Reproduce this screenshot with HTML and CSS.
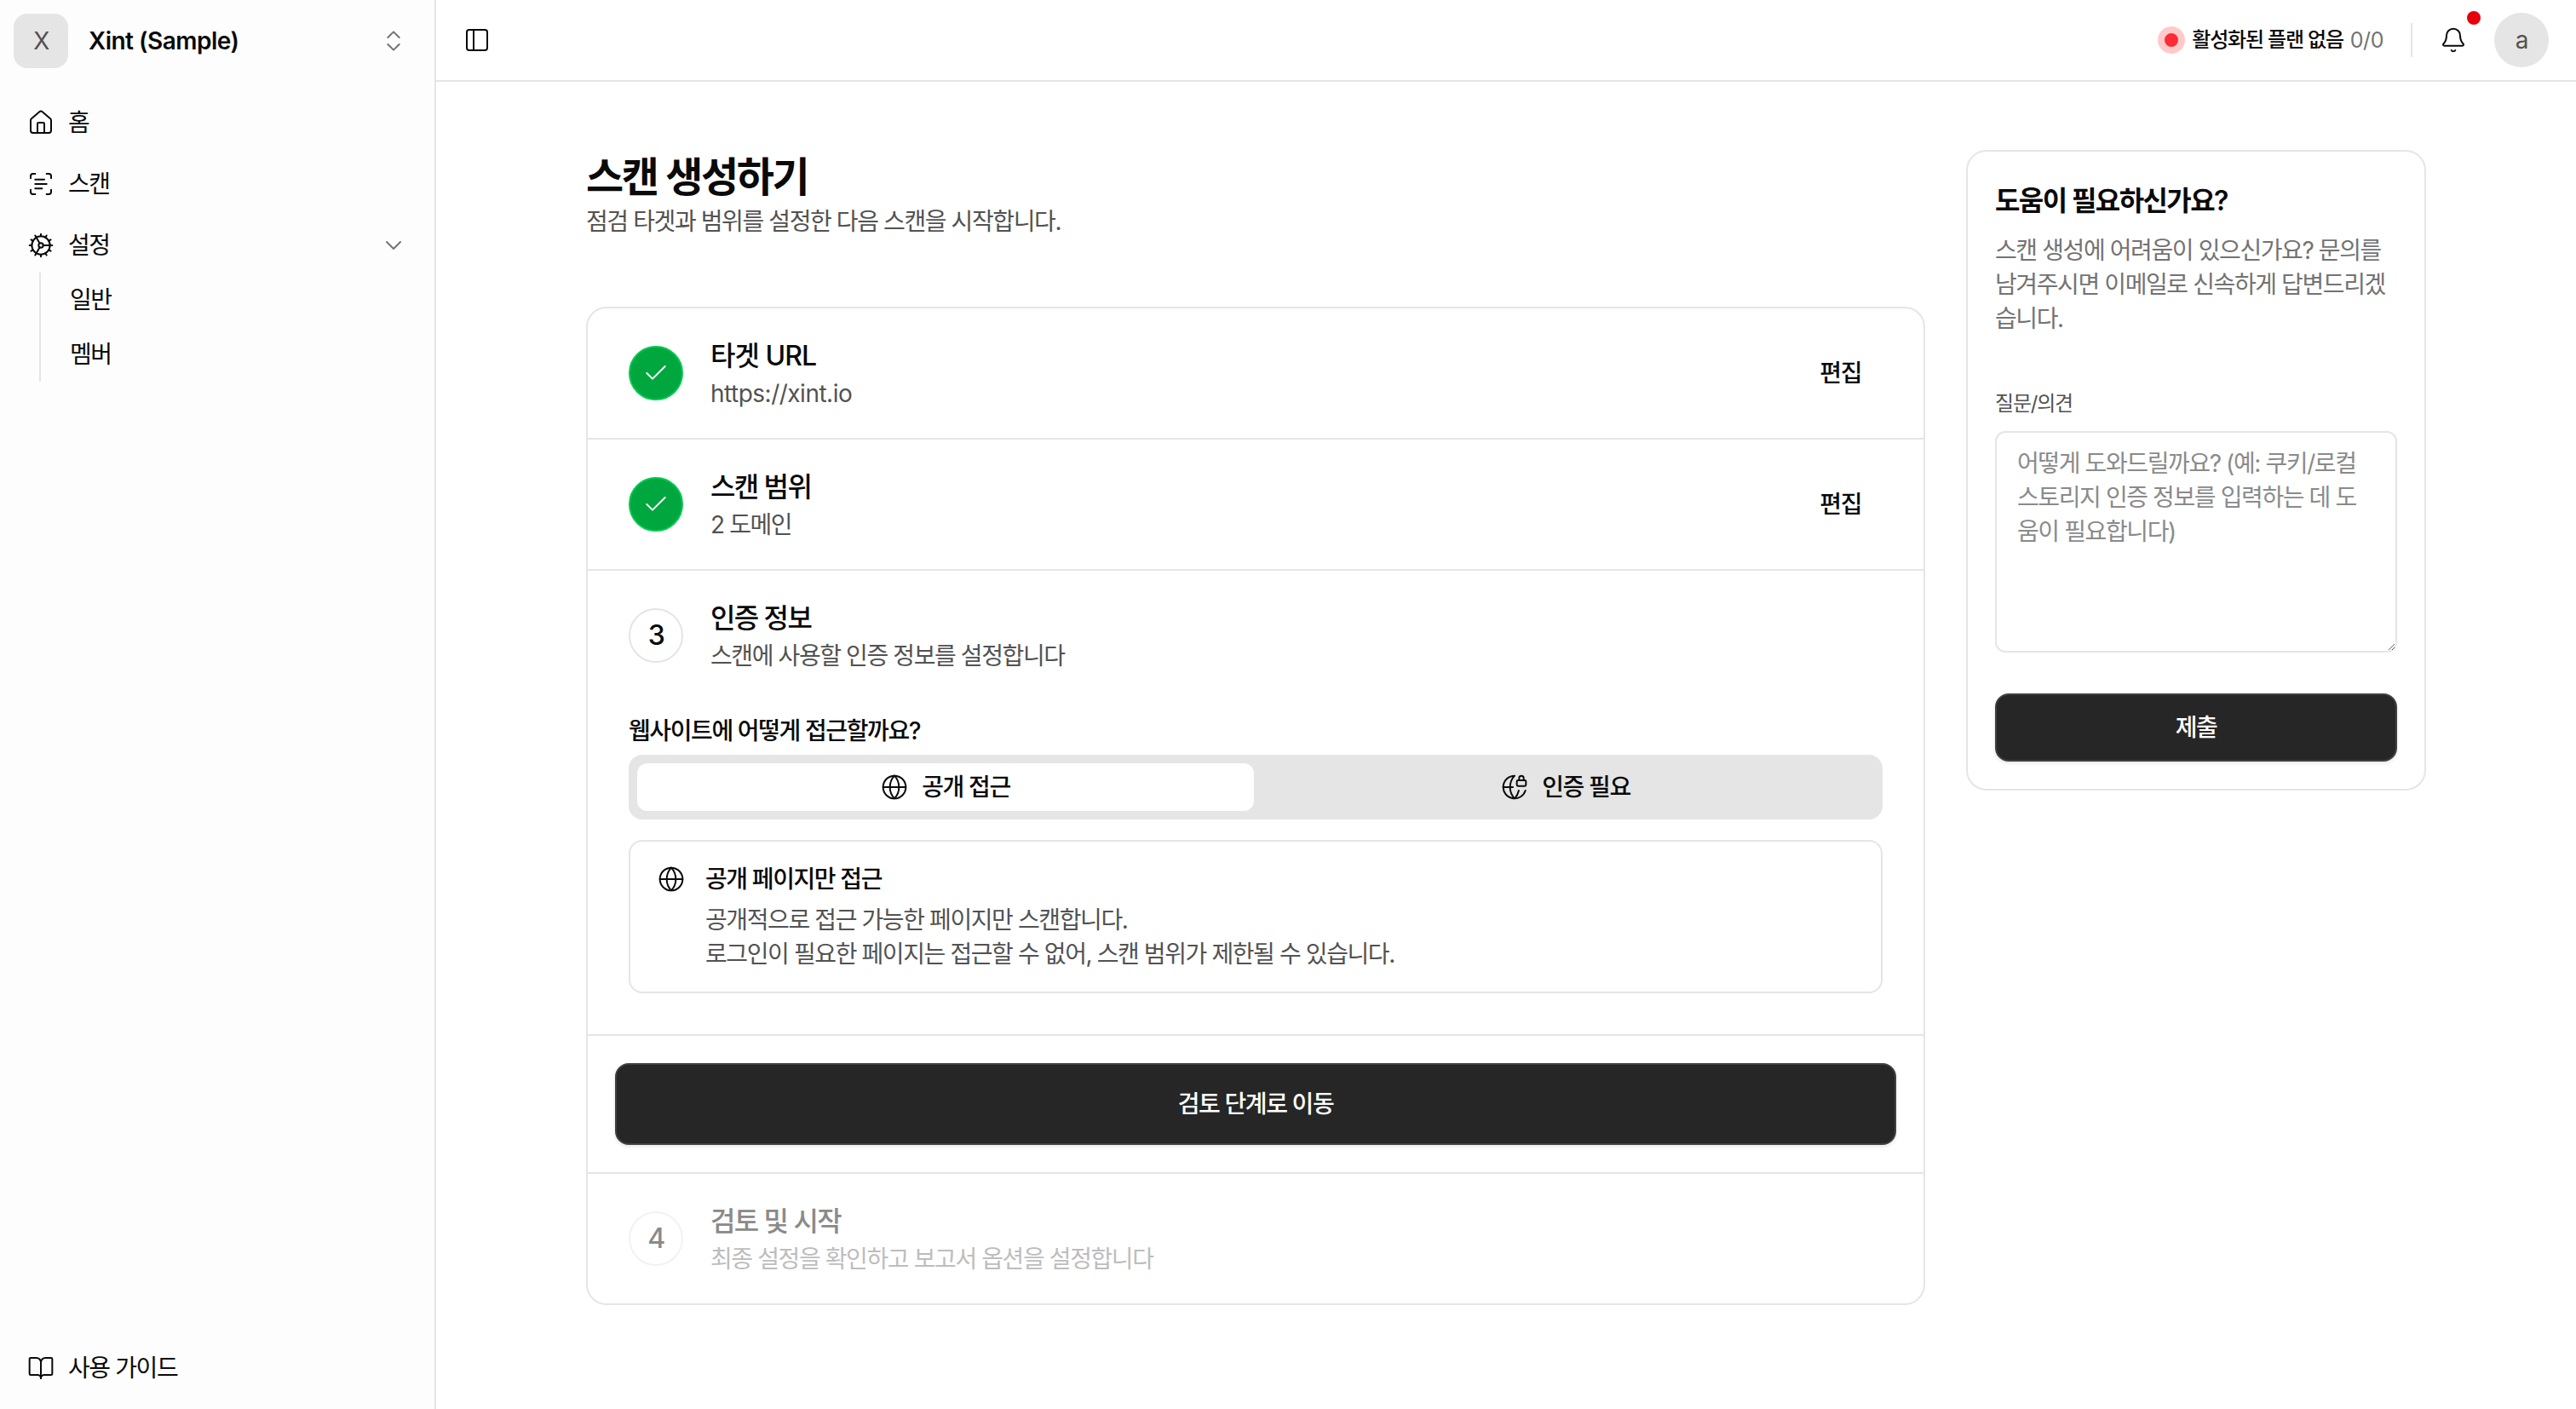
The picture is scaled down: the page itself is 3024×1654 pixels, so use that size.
FILE: index.html
```html
<!DOCTYPE html>
<html lang="ko">
<head>
    <meta charset="UTF-8">
    <title>스캔 생성하기 - Xint</title>
    <link rel="stylesheet" href="styles.css">
</head>
<body>

    <!-- Sidebar -->
    <aside class="sidebar">
        <div class="org-switch">
            <span class="org-logo">X</span>
            <span class="org-name latin">Xint (Sample)</span>
            <svg class="icon icon-muted" viewBox="0 0 24 24"><path d="m7 15 5 5 5-5"/><path d="m7 9 5-5 5 5"/></svg>
        </div>

        <nav class="nav">
            <a class="nav-item">
                <svg class="icon" viewBox="0 0 24 24"><path d="M15 21v-8a1 1 0 0 0-1-1h-4a1 1 0 0 0-1 1v8"/><path d="M3 10a2 2 0 0 1 .709-1.528l7-5.999a2 2 0 0 1 2.582 0l7 5.999A2 2 0 0 1 21 10v9a2 2 0 0 1-2 2H5a2 2 0 0 1-2-2z"/></svg>
                <span>홈</span>
            </a>
            <a class="nav-item">
                <svg class="icon" viewBox="0 0 24 24"><path d="M3 7V5a2 2 0 0 1 2-2h2"/><path d="M17 3h2a2 2 0 0 1 2 2v2"/><path d="M21 17v2a2 2 0 0 1-2 2h-2"/><path d="M7 21H5a2 2 0 0 1-2-2v-2"/><path d="M7 8h8"/><path d="M7 12h10"/><path d="M7 16h6"/></svg>
                <span>스캔</span>
            </a>
            <a class="nav-item">
                <svg class="icon" viewBox="0 0 24 24"><path d="M12 20a8 8 0 1 0 0-16 8 8 0 0 0 0 16Z"/><path d="M12 14a2 2 0 1 0 0-4 2 2 0 0 0 0 4Z"/><path d="M12 2v2"/><path d="M12 22v-2"/><path d="m17 20.66-1-1.73"/><path d="M11 10.27 7 3.34"/><path d="m20.66 17-1.73-1"/><path d="m3.34 7 1.73 1"/><path d="M14 12h8"/><path d="M2 12h2"/><path d="m20.66 7-1.73 1"/><path d="m3.34 17 1.73-1"/><path d="m17 3.34-1 1.73"/><path d="m11 13.73-4 6.93"/></svg>
                <span>설정</span>
                <svg class="icon icon-muted nav-caret" viewBox="0 0 24 24"><path d="m6 9 6 6 6-6"/></svg>
            </a>
            <div class="subnav">
                <a class="subnav-item">일반</a>
                <a class="subnav-item">멤버</a>
            </div>
        </nav>

        <a class="nav-item guide-link">
            <svg class="icon" viewBox="0 0 24 24"><path d="M12 7v14"/><path d="M3 18a1 1 0 0 1-1-1V4a1 1 0 0 1 1-1h5a4 4 0 0 1 4 4 4 4 0 0 1 4-4h5a1 1 0 0 1 1 1v13a1 1 0 0 1-1 1h-6a3 3 0 0 0-3 3 3 3 0 0 0-3-3z"/></svg>
            <span>사용 가이드</span>
        </a>
    </aside>

    <div class="page">
        <!-- Top Bar -->
        <header class="topbar">
            <svg class="icon" viewBox="0 0 24 24"><rect width="18" height="18" x="3" y="3" rx="2"/><path d="M9 3v18"/></svg>
            <div class="topbar-right">
                <span class="plan-dot"></span>
                <span class="plan-text">활성화된 플랜 없음</span>
                <span class="plan-count latin">0/0</span>
                <span class="topbar-sep"></span>
                <span class="bell">
                    <svg class="icon" viewBox="0 0 24 24"><path d="M10.268 21a2 2 0 0 0 3.464 0"/><path d="M3.262 15.326A1 1 0 0 0 4 17h16a1 1 0 0 0 .74-1.673C19.41 13.956 18 12.499 18 8A6 6 0 0 0 6 8c0 4.499-1.411 5.956-2.738 7.326"/></svg>
                    <span class="bell-badge"></span>
                </span>
                <span class="avatar">a</span>
            </div>
        </header>

        <main class="content">
            <section class="wizard">
                <h1>스캔 생성하기</h1>
                <p class="lead">점검 타겟과 범위를 설정한 다음 스캔을 시작합니다.</p>

                <div class="steps">
                    <div class="step">
                        <span class="step-badge done">
                            <svg class="icon" viewBox="0 0 24 24"><path d="M20 6 9 17l-5-5"/></svg>
                        </span>
                        <div class="step-text">
                            <h3 class="mixed">타겟 URL</h3>
                            <p class="latin">https://xint.io</p>
                        </div>
                        <button class="edit-btn">편집</button>
                    </div>

                    <div class="step">
                        <span class="step-badge done">
                            <svg class="icon" viewBox="0 0 24 24"><path d="M20 6 9 17l-5-5"/></svg>
                        </span>
                        <div class="step-text">
                            <h3>스캔 범위</h3>
                            <p>2 도메인</p>
                        </div>
                        <button class="edit-btn">편집</button>
                    </div>

                    <div class="step-open">
                        <div class="step-head">
                            <span class="step-badge">3</span>
                            <div class="step-text">
                                <h3>인증 정보</h3>
                                <p>스캔에 사용할 인증 정보를 설정합니다</p>
                            </div>
                        </div>

                        <p class="field-label">웹사이트에 어떻게 접근할까요?</p>
                        <div class="segmented">
                            <div class="segment active">
                                <svg class="icon" viewBox="0 0 24 24"><circle cx="12" cy="12" r="10"/><path d="M12 2a14.5 14.5 0 0 0 0 20 14.5 14.5 0 0 0 0-20"/><path d="M2 12h20"/></svg>
                                <span>공개 접근</span>
                            </div>
                            <div class="segment">
                                <svg class="icon" viewBox="0 0 24 24"><path d="M15.686 15A14.5 14.5 0 0 1 12 22a14.5 14.5 0 0 1 0-20 10 10 0 1 0 9.542 13"/><path d="M2 12h8.5"/><path d="M20 6V4a2 2 0 1 0-4 0v2"/><rect width="8" height="5" x="14" y="6" rx="1"/></svg>
                                <span>인증 필요</span>
                            </div>
                        </div>

                        <div class="info-box">
                            <svg class="icon" viewBox="0 0 24 24"><circle cx="12" cy="12" r="10"/><path d="M12 2a14.5 14.5 0 0 0 0 20 14.5 14.5 0 0 0 0-20"/><path d="M2 12h20"/></svg>
                            <div>
                                <h4>공개 페이지만 접근</h4>
                                <p>공개적으로 접근 가능한 페이지만 스캔합니다.<br>로그인이 필요한 페이지는 접근할 수 없어, 스캔 범위가 제한될 수 있습니다.</p>
                            </div>
                        </div>
                    </div>

                    <div class="step-action">
                        <button class="primary-btn">검토 단계로 이동</button>
                    </div>

                    <div class="step step-disabled">
                        <span class="step-badge">4</span>
                        <div class="step-text">
                            <h3>검토 및 시작</h3>
                            <p>최종 설정을 확인하고 보고서 옵션을 설정합니다</p>
                        </div>
                    </div>
                </div>
            </section>

            <!-- Help Card -->
            <aside class="help-card">
                <h2>도움이 필요하신가요?</h2>
                <p class="help-desc">스캔 생성에 어려움이 있으신가요? 문의를 남겨주시면 이메일로 신속하게 답변드리겠습니다.</p>
                <label class="help-label" for="question">질문/의견</label>
                <textarea class="help-input" id="question" placeholder="어떻게 도와드릴까요? (예: 쿠키/로컬 스토리지 인증 정보를 입력하는 데 도움이 필요합니다)"></textarea>
                <button class="primary-btn help-submit">제출</button>
            </aside>
        </main>
    </div>

</body>
</html>
```

FILE: styles.css
```css
* {
    box-sizing: border-box;
    letter-spacing: -0.05em;
}

/* Latin strings need less tightening than hangul */
.latin {
    letter-spacing: -0.018em;
}

.mixed {
    letter-spacing: -0.03em;
}

body {
    margin: 0;
    height: 1654px;
    display: flex;
    background: #fff;
    color: #0a0a0a;
    font-family: Inter, "Noto Sans CJK KR", sans-serif;
    font-size: 28px;
    line-height: 40px;
    overflow: hidden;
}

h1, h2, h3, h4, p {
    margin: 0;
}

button {
    font: inherit;
    cursor: pointer;
}

.icon {
    width: 32px;
    height: 32px;
    flex: none;
    fill: none;
    stroke: currentColor;
    stroke-width: 1.5;
    stroke-linecap: round;
    stroke-linejoin: round;
}

.icon-muted {
    color: #737373;
}

/* Sidebar */
.sidebar {
    width: 512px;
    flex: none;
    display: flex;
    flex-direction: column;
    background: #fdfdfd;
    border-right: 2px solid #e5e5e5;
    padding: 16px;
}

.org-switch {
    display: flex;
    align-items: center;
    height: 64px;
    padding-right: 16px;
}

.org-logo {
    width: 64px;
    height: 64px;
    display: flex;
    align-items: center;
    justify-content: center;
    background: #e5e5e5;
    border-radius: 16px;
    color: #525252;
}

.org-name {
    flex: 1;
    margin-left: 24px;
    font-weight: 600;
}

.nav {
    flex: 1;
    margin-top: 32px;
    display: flex;
    flex-direction: column;
    gap: 8px;
}

.nav-item {
    display: flex;
    align-items: center;
    gap: 16px;
    height: 64px;
    padding: 0 16px;
}

.nav-caret {
    margin-left: auto;
}

.subnav {
    margin: -8px 0 0 30px;
    padding-left: 34px;
    border-left: 2px solid #e5e5e5;
}

.subnav-item {
    display: flex;
    align-items: center;
    height: 64px;
}

/* Top Bar */
.page {
    flex: 1;
    min-width: 0;
}

.topbar {
    height: 96px;
    display: flex;
    align-items: center;
    justify-content: space-between;
    padding: 0 32px;
    border-bottom: 2px solid #e5e5e5;
}

.topbar-right {
    display: flex;
    align-items: center;
}

.plan-dot {
    width: 32px;
    height: 32px;
    border-radius: 50%;
    background: #fb2c36;
    border: 8px solid #ffc9c9;
}

.plan-text {
    margin-left: 8px;
    font-size: 24px;
    font-weight: 500;
}

.plan-count {
    margin-left: 8px;
    font-size: 25px;
    color: #737373;
}

.topbar-sep {
    width: 2px;
    height: 40px;
    margin: 0 32px;
    background: #e5e5e5;
}

.bell {
    position: relative;
    display: flex;
    margin-right: 32px;
}

.bell-badge {
    position: absolute;
    top: -18px;
    right: -16px;
    width: 16px;
    height: 16px;
    border-radius: 50%;
    background: #e7000b;
}

.avatar {
    width: 64px;
    height: 64px;
    display: flex;
    align-items: center;
    justify-content: center;
    border-radius: 50%;
    background: #e5e5e5;
    color: #525252;
}

/* Main Content */
.content {
    width: 2160px;
    margin: 0 auto;
    padding-top: 80px;
    display: flex;
    align-items: flex-start;
    gap: 48px;
}

.wizard {
    flex: 1;
    min-width: 0;
}

h1 {
    font-size: 48px;
    line-height: 64px;
    font-weight: 600;
}

.lead {
    color: #525252;
}

.steps {
    margin-top: 80px;
    border: 2px solid #e5e5e5;
    border-radius: 24px;
}

.step {
    display: flex;
    align-items: center;
    gap: 32px;
    padding: 32px 48px;
    border-bottom: 2px solid #e5e5e5;
}

.step:last-child {
    border-bottom: none;
}

.step-head {
    display: flex;
    align-items: center;
    gap: 32px;
}

.step-badge {
    width: 64px;
    height: 64px;
    flex: none;
    display: flex;
    align-items: center;
    justify-content: center;
    border: 2px solid #e5e5e5;
    border-radius: 50%;
    font-size: 32px;
    font-weight: 500;
}

.step-badge.done {
    background: #00a63e;
    border-color: #00c950;
    color: #fff;
}

.step-text {
    flex: 1;
}

.step-text h3 {
    font-size: 32px;
    line-height: 48px;
    font-weight: 500;
}

.step-text p {
    color: #525252;
}

.edit-btn {
    background: none;
    border: none;
    padding: 0 32px;
    font-weight: 500;
    margin-right: -7px;
    color: #0a0a0a;
}

.step-open {
    padding: 32px 48px 48px;
    border-bottom: 2px solid #e5e5e5;
}

.field-label {
    margin-top: 48px;
    font-weight: 500;
}

.segmented {
    margin-top: 8px;
    height: 76px;
    display: flex;
    gap: 4px;
    padding: 10px;
    background: #e5e5e5;
    border-radius: 16px;
}

.segment {
    flex: 1;
    display: flex;
    align-items: center;
    justify-content: center;
    gap: 16px;
    border-radius: 12px;
    font-weight: 500;
}

.segment.active {
    background: #fff;
}

.info-box {
    margin-top: 24px;
    display: flex;
    gap: 24px;
    padding: 24px 32px;
    border: 2px solid #e5e5e5;
    border-radius: 16px;
}

.info-box .icon {
    margin-top: 4px;
}

.info-box h4 {
    font-weight: 500;
}

.info-box p {
    margin-top: 8px;
    color: #525252;
}

.step-action {
    padding: 32px;
    border-bottom: 2px solid #e5e5e5;
}

.primary-btn {
    display: block;
    width: 100%;
    height: 96px;
    background: #262626;
    border: 2px solid #404040;
    border-radius: 16px;
    box-shadow: 0 2px 4px rgba(0, 0, 0, 0.1);
    color: #fff;
    font-weight: 500;
}

.step-disabled .step-text h3 {
    color: #8a8a8a;
}

.step-disabled .step-text p {
    color: #bdbdbd;
}

.step-disabled .step-badge {
    border-color: #f2f2f2;
    color: #8a8a8a;
}

/* Help Card */
.help-card {
    width: 540px;
    flex: none;
    display: flex;
    flex-direction: column;
    padding: 34px 32px 32px;
    border: 2px solid #e5e5e5;
    border-radius: 24px;
}

.help-card h2 {
    font-size: 32px;
    line-height: 48px;
    font-weight: 600;
}

.help-desc {
    margin-top: 14px;
    color: #737373;
}

.help-label {
    margin-top: 64px;
    font-size: 24px;
    line-height: 32px;
    color: #525252;
}

.help-input {
    margin-top: 16px;
    height: 260px;
    padding: 16px 24px;
    border: 2px solid #e5e5e5;
    border-radius: 12px;
    font: inherit;
    color: #0a0a0a;
    resize: vertical;
    outline: none;
}

.help-input::placeholder {
    color: #8a8a8a;
}

.help-submit {
    margin-top: 48px;
    height: 80px;
}
```
